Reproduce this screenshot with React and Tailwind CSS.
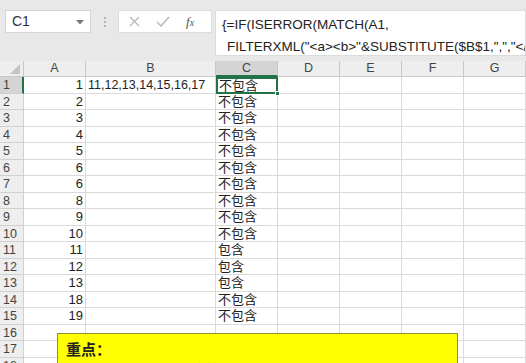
import React from "react";

const cols = ["A", "B", "C", "D", "E", "F", "G"];

const rows = [
  [1, "11,12,13,14,15,16,17", "不包含"],
  [2, "", "不包含"],
  [3, "", "不包含"],
  [4, "", "不包含"],
  [5, "", "不包含"],
  [6, "", "不包含"],
  [6, "", "不包含"],
  [8, "", "不包含"],
  [9, "", "不包含"],
  [10, "", "不包含"],
  [11, "", "包含"],
  [12, "", "包含"],
  [13, "", "包含"],
  [18, "", "不包含"],
  [19, "", "不包含"],
  ["", "", ""],
  ["", "", ""],
  ["", "", ""],
];

const font = { fontFamily: '"Liberation Sans", "Noto Sans CJK SC", sans-serif' };

const App = () => {
  return (
    <div
      className="relative w-[526px] h-[363px] overflow-hidden bg-white text-[#222]"
      style={font}
    >
      {/* Formula bar area */}
      <div className="h-[61px] bg-[#e8e8e8] flex items-start pt-[10px] pl-[5px]">
        <div className="w-[86px] h-[23px] bg-white border border-[#d6d6d6] flex items-center justify-between px-[6px]">
          <span className="text-[14px] text-[#333]">C1</span>
          <svg width="8" height="5" viewBox="0 0 8 5" className="mt-[1px]">
            <path d="M0 0 L8 0 L4 4.5 Z" fill="#777" />
          </svg>
        </div>
        <div className="w-[27px] h-[23px] flex flex-col items-center justify-center gap-[2px]">
          <span className="w-[2px] h-[2px] bg-[#b4b4b4]" />
          <span className="w-[2px] h-[2px] bg-[#b4b4b4]" />
          <span className="w-[2px] h-[2px] bg-[#b4b4b4]" />
        </div>
        <div className="w-[94px] h-[23px] bg-white border border-[#dcdcdc] flex items-center pl-[10px] gap-[16px]">
          <svg width="11" height="11" viewBox="0 0 11 11">
            <path d="M1 1 L10 10 M10 1 L1 10" stroke="#b8b8b8" strokeWidth="1.3" />
          </svg>
          <svg width="14" height="11" viewBox="0 0 14 11">
            <path d="M1 6 L5 10 L13 1" stroke="#b8b8b8" strokeWidth="1.4" fill="none" />
          </svg>
          <span className="text-[13px] italic text-[#555]" style={{ fontFamily: '"Liberation Serif", serif' }}>
            f<span className="text-[10px]">x</span>
          </span>
        </div>
        <div className="ml-[3px] flex-1 h-[46px] bg-white border border-[#dcdcdc] pl-[6px] pt-[3px] text-[13.5px] leading-[22px] whitespace-nowrap overflow-hidden">
          <div>{"{=IF(ISERROR(MATCH(A1,"}</div>
          <div className="pl-[5px]">{'FILTERXML("<a><b>"&SUBSTITUTE($B$1,",","</b><'}</div>
        </div>
      </div>

      {/* Sheet */}
      <div className="grid grid-cols-[24px_62px_130px_62px_62px_62px_62px_62px]">
        {/* header row */}
        <div className="h-[16px] bg-[#eeeeee] border-r border-b border-[#c8c8c8] relative">
          <svg width="10" height="10" viewBox="0 0 10 10" className="absolute right-[3px] bottom-[2px]">
            <path d="M10 0 L10 10 L0 10 Z" fill="#c4c4c4" />
          </svg>
        </div>
        {cols.map((c) => (
          <div
            key={c}
            className={
              c === "C"
                ? "h-[16px] bg-[#d4d4d4] border-r border-[#c8c8c8] border-b-2 border-b-[#217346] flex items-center justify-center text-[12.5px] text-[#444]"
                : "h-[16px] bg-[#eeeeee] border-r border-b border-[#c8c8c8] flex items-center justify-center text-[12.5px] text-[#444]"
            }
          >
            {c}
          </div>
        ))}

        {rows.map((r, i) => (
          <React.Fragment key={i}>
            <div
              className={
                i === 0
                  ? "h-[16.5px] bg-[#d4d4d4] border-r-2 border-r-[#217346] border-b border-[#d0d0d0] text-[12.5px] text-[#444] pl-[3px] leading-[16px]"
                  : "h-[16.5px] bg-[#eeeeee] border-r border-b border-[#d0d0d0] text-[12.5px] text-[#444] pl-[3px] leading-[16px]"
              }
            >
              {i + 1}
            </div>
            <div className="h-[16.5px] border-r border-b border-[#dadada] text-right pr-[2px] text-[13px] leading-[16px]">
              {r[0]}
            </div>
            <div className="h-[16.5px] border-r border-b border-[#dadada] pl-[2px] text-[12.5px] leading-[16px] whitespace-nowrap">
              {r[1]}
            </div>
            <div
              className={
                i === 0
                  ? "relative h-[16.5px] border-2 border-[#217346] pl-[1px] text-[13px] leading-[13px]"
                  : "h-[16.5px] border-r border-b border-[#dadada] pl-[2px] text-[13px] leading-[16px]"
              }
            >
              {r[2]}
              {i === 0 && (
                <span className="absolute right-[-4px] bottom-[-4px] w-[5px] h-[5px] bg-[#217346] border border-white" />
              )}
            </div>
            <div className="h-[16.5px] border-r border-b border-[#dadada]" />
            <div className="h-[16.5px] border-r border-b border-[#dadada]" />
            <div className="h-[16.5px] border-r border-b border-[#dadada]" />
            <div className="h-[16.5px] border-r border-b border-[#dadada]" />
          </React.Fragment>
        ))}
      </div>

      {/* Note box */}
      <div className="absolute left-[57px] top-[333px] w-[401px] h-[80px] bg-[#ffff00] border border-[#8f8f3a] px-[8px] pt-[5px]">
        <div className="text-[15px] font-bold leading-[20px]" style={{ fontFamily: '"Noto Sans CJK SC", sans-serif' }}>
          重点：
        </div>
        <div className="text-[14px] font-bold leading-[20px] pl-[10px]" style={{ fontFamily: '"Noto Sans CJK SC", sans-serif' }}>
          FILTERXML函数将字符串拆分为数组
        </div>
      </div>
    </div>
  );
};

export default App;
